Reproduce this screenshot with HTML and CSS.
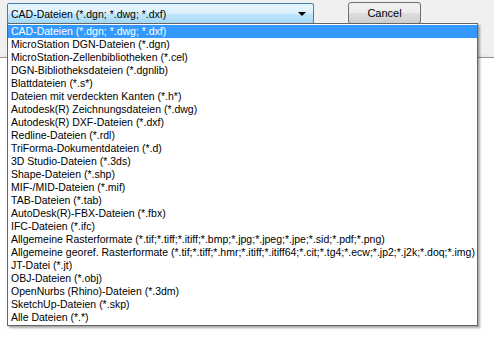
FILE: index.html
```html
<!DOCTYPE html>
<html lang="de">
<head>
    <meta charset="UTF-8">
    <title>Datei öffnen</title>
    <link rel="stylesheet" href="styles.css">
</head>
<body>
    <div class="dialog">
        <div class="toolbar">
            <div class="combo">
                <span class="combo-text">CAD-Dateien (*.dgn; *.dwg; *.dxf)</span>
                <span class="combo-arrow"></span>
            </div>
            <button class="btn">Cancel</button>
        </div>
        <div class="dialog-edge"></div>
    </div>

    <!-- aufgeklappte Liste der Dateitypen -->
    <ul class="dropdown">
        <li class="selected">CAD-Dateien (*.dgn; *.dwg; *.dxf)</li>
        <li>MicroStation DGN-Dateien (*.dgn)</li>
        <li>MicroStation-Zellenbibliotheken (*.cel)</li>
        <li>DGN-Bibliotheksdateien (*.dgnlib)</li>
        <li>Blattdateien (*.s*)</li>
        <li>Dateien mit verdeckten Kanten (*.h*)</li>
        <li>Autodesk(R) Zeichnungsdateien (*.dwg)</li>
        <li>Autodesk(R) DXF-Dateien (*.dxf)</li>
        <li>Redline-Dateien (*.rdl)</li>
        <li>TriForma-Dokumentdateien (*.d)</li>
        <li>3D Studio-Dateien (*.3ds)</li>
        <li>Shape-Dateien (*.shp)</li>
        <li>MIF-/MID-Dateien (*.mif)</li>
        <li>TAB-Dateien (*.tab)</li>
        <li>AutoDesk(R)-FBX-Dateien (*.fbx)</li>
        <li>IFC-Dateien (*.ifc)</li>
        <li>Allgemeine Rasterformate (*.tif;*.tiff;*.itiff;*.bmp;*.jpg;*.jpeg;*.jpe;*.sid;*.pdf;*.png)</li>
        <li>Allgemeine georef. Rasterformate (*.tif;*.tiff;*.hmr;*.itiff;*.itiff64;*.cit;*.tg4;*.ecw;*.jp2;*.j2k;*.doq;*.img)</li>
        <li>JT-Datei (*.jt)</li>
        <li>OBJ-Dateien (*.obj)</li>
        <li>OpenNurbs (Rhino)-Dateien (*.3dm)</li>
        <li>SketchUp-Dateien (*.skp)</li>
        <li>Alle Dateien (*.*)</li>
    </ul>
</body>
</html>
```

FILE: styles.css
```css
body {
    margin: 0;
    background-color: #ffffff;
    font-family: "Liberation Sans", Arial, sans-serif;
    font-size: 10.5px;
    color: #000000;
}

/* Fensterhintergrund hinter der Liste */
.dialog {
    background-color: #f0f0f0;
    height: 58px;
}

.toolbar {
    display: flex;
    align-items: flex-start;
    padding: 2px 0 0 7px;
}

.combo {
    display: flex;
    align-items: center;
    box-sizing: border-box;
    width: 307px;
    height: 21px;
    margin-top: 1px;
    padding: 0 7px 0 3px;
    border: 1px solid #3c7fb1;
    border-radius: 2px;
    background: linear-gradient(to bottom, #eaf6fd 0%, #d9f0fc 50%, #bee6fd 51%, #a7d9f5 100%);
}

.combo-text {
    flex: 1;
}

.combo-arrow {
    width: 0;
    height: 0;
    border-left: 4px solid transparent;
    border-right: 4px solid transparent;
    border-top: 4px solid #000000;
}

.btn {
    box-sizing: border-box;
    width: 73px;
    height: 22px;
    margin-left: 34px;
    padding: 0;
    border: 1px solid #707070;
    border-radius: 3px;
    background: linear-gradient(to bottom, #f2f2f2 0%, #ebebeb 50%, #dddddd 51%, #cfcfcf 100%);
    font-family: "Liberation Sans", Arial, sans-serif;
    font-size: 11px;
    color: #000000;
}

.dialog-edge {
    height: 4px;
    margin-top: 33px;
    background: linear-gradient(to bottom, #8c8c8c, #b49c9c 40%, #6e6e6e);
    box-shadow: 0 6px 10px rgba(0, 0, 0, 0.4);
}

/* die Liste liegt über dem Fenster */
.dropdown {
    position: absolute;
    left: 7px;
    top: 23px;
    width: 469px;
    margin: 0;
    padding: 1px 0;
    list-style: none;
    background-color: #ffffff;
    border: 1px solid #646464;
    box-shadow: 2px 2px 2px rgba(0, 0, 0, 0.35);
}

.dropdown li {
    height: 13px;
    line-height: 13px;
    padding-left: 3px;
    white-space: nowrap;
    overflow: hidden;
}

.dropdown li.selected {
    background-color: #3399ff;
    color: #ffffff;
}
```
